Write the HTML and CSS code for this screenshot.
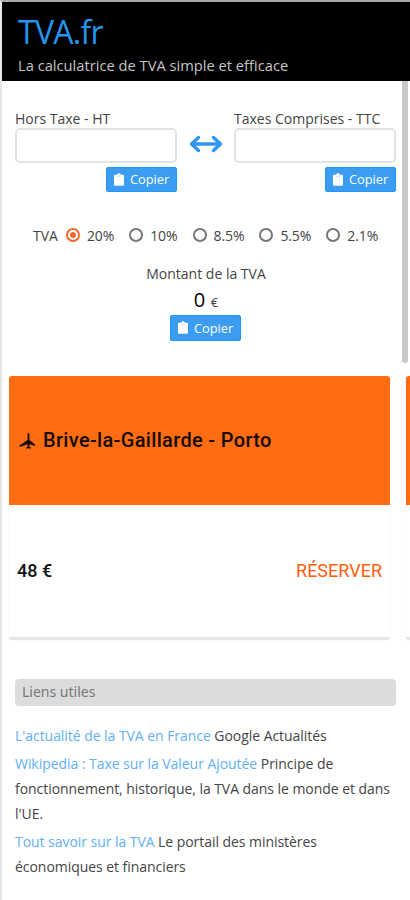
FILE: index.html
```html
<!DOCTYPE html>
<html lang="fr">
<head>
    <meta charset="UTF-8">
    <meta name="viewport" content="width=device-width, initial-scale=1.0">
    <title>TVA.fr - La calculatrice de TVA</title>
    <link rel="stylesheet" href="styles.css">
</head>
<body>
    <svg class="sprite" width="0" height="0">
        <symbol id="clipboard" viewBox="0 0 10 13">
            <path fill="currentColor" d="M1 1.800H3C3.200 .8 4 .2 5 .2S6.800 .8 7 1.800H9Q10 1.800 10 2.800V11.800Q10 12.800 9 12.800H1Q0 12.800 0 11.800V2.800Q0 1.800 1 1.800Z"/>
            <path fill="#a5d2fa" d="M2.800 2.800H7.200V3.500H2.800Z"/>
        </symbol>
    </svg>

    <header>
        <h1>TVA.fr</h1>
        <p>La calculatrice de TVA simple et efficace</p>
    </header>

    <div class="scrollbar"></div>

    <main>
        <div class="montants">
            <div class="champ">
                <label for="ht">Hors Taxe - HT</label>
                <input type="text" id="ht">
                <button class="copier"><svg width="10" height="13"><use href="#clipboard"/></svg>Copier</button>
            </div>
            <svg class="fleche" width="34" height="18" viewBox="0 0 34 18" fill="none" stroke="#2f97f0" stroke-width="3.4" stroke-linecap="round" stroke-linejoin="round">
                <path d="M3 9H31M9.500 2.500L2.500 9L9.500 15.500M24.500 2.500L31.500 9L24.500 15.500"/>
            </svg>
            <div class="champ">
                <label for="ttc">Taxes Comprises - TTC</label>
                <input type="text" id="ttc">
                <button class="copier"><svg width="10" height="13"><use href="#clipboard"/></svg>Copier</button>
            </div>
        </div>

        <div class="taux">
            <span>TVA</span>
            <label><input type="radio" name="taux" value="20" checked>20%</label>
            <label><input type="radio" name="taux" value="10">10%</label>
            <label><input type="radio" name="taux" value="8.5">8.5%</label>
            <label><input type="radio" name="taux" value="5.5">5.5%</label>
            <label><input type="radio" name="taux" value="2.1">2.1%</label>
        </div>

        <div class="resultat">
            <p>Montant de la TVA</p>
            <p class="valeur"><strong>0</strong> <small>€</small></p>
            <button class="copier"><svg width="10" height="13"><use href="#clipboard"/></svg>Copier</button>
        </div>

        <div class="annonces">
            <div class="annonce">
                <div class="trajet">
                    <svg width="17" height="16" viewBox="0 0 17 16">
                        <path fill="#140a04" d="M9.500 0Q10.400 .2 10.400 1.500V7L16 11.600V13L10.400 11.300V13.700L11.800 14.700V15.800L9.500 15.300L7.200 15.800V14.700L8.600 13.700V11.300L.5 14V12.600L8.600 7V1.500Q8.600 .2 9.500 0Z"/>
                    </svg>
                    <h2>Brive-la-Gaillarde - Porto</h2>
                </div>
                <div class="prix">
                    <span>48 €</span>
                    <a>RÉSERVER</a>
                </div>
            </div>
            <div class="annonce">
                <div class="trajet"></div>
            </div>
        </div>

        <section class="liens">
            <h3>Liens utiles</h3>
            <p><a>L'actualité de la TVA en France</a> Google Actualités</p>
            <p><a>Wikipedia : Taxe sur la Valeur Ajoutée</a> Principe de fonctionnement, historique, la TVA dans le monde et dans l'UE.</p>
            <p><a>Tout savoir sur la TVA</a> Le portail des ministères économiques et financiers</p>
        </section>
    </main>
</body>
</html>
```

FILE: styles.css
```css
* {
    box-sizing: border-box;
}
body {
    font-family: "Open Sans", "Noto Sans", sans-serif;
    font-size: 14px;
    color: #444;
    background-color: #fff;
    margin: 0;
    height: 900px;
    border-left: 2px solid #e6e6e6;
    border-top: 2px solid #aaa;
    overflow: hidden;
    position: relative;
}
h1, h2, h3, p {
    margin: 0;
    font-weight: normal;
}
.sprite {
    position: absolute;
}
header {
    background-color: #000;
    height: 79px;
    padding: 9px 16px 0;
}
header h1 {
    color: #2595ee;
    font-size: 32px;
    letter-spacing: -0.7px;
    line-height: 42px;
}
header p {
    color: #c4c4c4;
    font-size: 14.7px;
    line-height: 25px;
}
.scrollbar {
    position: absolute;
    top: 79px;
    right: 2px;
    width: 6px;
    height: 282px;
    background-color: #c8c8c8;
    border-radius: 0 0 3px 3px;
}
.montants {
    display: flex;
    justify-content: space-between;
    padding: 29px 14px 0 13px;
}
.champ {
    width: 162px;
    display: flex;
    flex-direction: column;
}
.champ label {
    line-height: 18px;
    white-space: nowrap;
}
.champ input {
    width: 100%;
    height: 35px;
    border: 2px solid #e2e2e2;
    border-radius: 5px;
    margin: 0 0 4px;
}
.champ .copier {
    align-self: flex-end;
}
.fleche {
    margin-top: 25px;
}
.copier {
    display: flex;
    align-items: center;
    justify-content: center;
    gap: 6px;
    width: 71px;
    height: 25px;
    padding: 0 0 1px;
    border: 1px solid #2196f3;
    border-radius: 2px;
    background-color: #3a9df2;
    color: #fff;
    font-family: inherit;
    font-size: 12.8px;
}
.taux {
    display: flex;
    align-items: center;
    height: 20px;
    margin: 33px 0 0 31px;
}
.taux label {
    display: flex;
    align-items: center;
    margin-right: 15px;
    letter-spacing: -0.1px;
}
.taux span + label {
    margin-left: 8px;
}
.taux input {
    appearance: none;
    width: 14px;
    height: 14px;
    margin: 0 7px 0 0;
    border: 2px solid #767676;
    border-radius: 50%;
}
.taux input:checked {
    border-color: #f5692c;
    background: radial-gradient(circle, #f5692c 2.500px, #fff 3.500px);
}
.resultat {
    display: flex;
    flex-direction: column;
    align-items: center;
    margin-top: 19px;
}
.resultat p {
    line-height: 20px;
}
.resultat .valeur {
    line-height: 31px;
    margin-bottom: -3px;
}
.valeur strong {
    font-size: 20px;
    font-weight: normal;
    color: #000;
}
.valeur small {
    font-size: 13px;
    margin-left: 2px;
}
.resultat .copier {
    height: 26px;
    margin-right: 1px;
}
.annonces {
    display: flex;
    gap: 16px;
    margin: 35px 0 0;
    padding: 0 0 2px 7px;
    overflow: hidden;
    font-family: Roboto, sans-serif;
}
.annonce {
    flex: 0 0 381px;
    height: 264px;
    border-radius: 3px;
    border-bottom: 3px solid #e6e6e6;
    box-shadow: 0 0 2px rgba(0, 0, 0, 0.08);
}
.trajet {
    display: flex;
    align-items: center;
    gap: 7px;
    height: 129px;
    padding-left: 10px;
    background-color: #ff6c12;
    border-radius: 3px 3px 0 0;
}
.trajet h2 {
    font-size: 20px;
    font-weight: 500;
    letter-spacing: 0.33px;
    line-height: 24px;
    padding-bottom: 2px;
    color: #140a04;
}
.prix {
    display: flex;
    justify-content: space-between;
    align-items: center;
    height: 131px;
    padding: 0 8px;
    font-size: 18px;
}
.prix span {
    font-weight: 500;
    color: #111;
}
.prix a {
    color: #ff5e0e;
}
.liens {
    padding: 37px 14px 0 13px;
}
.liens h3 {
    height: 27px;
    line-height: 26px;
    padding-left: 7px;
    margin-bottom: 17px;
    background-color: #dcdcdc;
    border-radius: 4px;
    color: #777;
    font-family: "Noto Sans", sans-serif;
    font-size: 14px;
}
.liens p {
    line-height: 25px;
    margin-bottom: 3px;
    letter-spacing: -0.05px;
}
.liens a {
    color: #62b0f5;
}
```
